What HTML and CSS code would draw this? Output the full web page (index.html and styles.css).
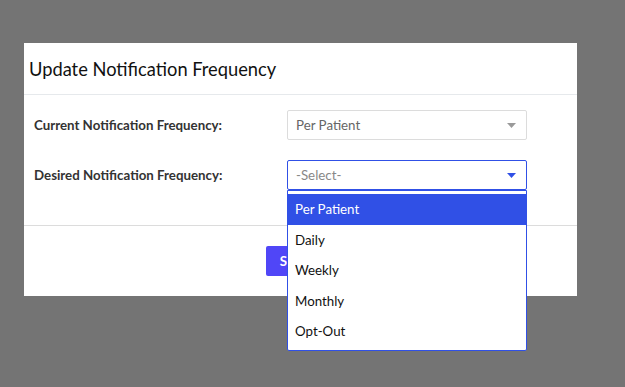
FILE: index.html
```html
<!DOCTYPE html>
<html lang="en">
<head>
    <meta charset="UTF-8">
    <title>Update Notification Frequency</title>
    <link rel="stylesheet" href="styles.css">
</head>
<body>
    <div class="modal">
        <div class="modal-header">
            <h2>Update Notification Frequency</h2>
        </div>
        <div class="modal-body">
            <div class="form-row">
                <label>Current Notification Frequency:</label>
                <div class="select disabled">
                    <span>Per Patient</span>
                    <svg class="arrow" width="9" height="5" viewBox="0 0 9 5"><path d="M0 0h9L4.5 5z"/></svg>
                </div>
            </div>
            <div class="form-row">
                <label>Desired Notification Frequency:</label>
                <div class="select-wrap">
                    <div class="select open">
                        <span class="placeholder">-Select-</span>
                        <svg class="arrow" width="9" height="5" viewBox="0 0 9 5"><path d="M0 0h9L4.5 5z"/></svg>
                    </div>
                    <ul class="options">
                        <li class="active">Per Patient</li>
                        <li>Daily</li>
                        <li>Weekly</li>
                        <li>Monthly</li>
                        <li>Opt-Out</li>
                    </ul>
                </div>
            </div>
        </div>
        <div class="modal-footer">
            <button type="button">Submit</button>
        </div>
    </div>
</body>
</html>
```

FILE: styles.css
```css
body {
    margin: 0;
    background-color: #747474;
    font-family: 'Lato', 'Noto Sans', sans-serif;
    color: #222;
    padding: 43px 0 0 24px;
    height: 387px;
    box-sizing: border-box;
    overflow: hidden;
}

.modal {
    width: 553px;
    background-color: #fff;
}

.modal-header {
    height: 51px;
    border-bottom: 1px solid #e6e9ec;
    display: flex;
    align-items: center;
    padding: 0 5px;
}

.modal-header h2 {
    margin: 0;
    font-size: 18.3px;
    font-weight: 400;
    color: #111;
}

.modal-body {
    padding: 15px 50px 15px 10px;
}

.form-row {
    display: flex;
    align-items: center;
    margin-bottom: 20px;
}

label {
    width: 253px;
    flex-shrink: 0;
    font-size: 13.3px;
    font-weight: 700;
    color: #333;
}

.select-wrap {
    position: relative;
}

.select {
    width: 240px;
    height: 30px;
    box-sizing: border-box;
    border: 1px solid #dcdcdc;
    border-radius: 2px;
    display: flex;
    align-items: center;
    justify-content: space-between;
    padding: 0 10px 0 8px;
    font-size: 13.3px;
    color: #666;
}

.select .arrow {
    fill: #9a9a9a;
}

.select.open {
    border-color: #3050e6;
}

.select.open .arrow {
    fill: #3050e6;
}

.placeholder {
    color: #888;
}

.options {
    position: absolute;
    top: 30px;
    left: 0;
    width: 240px;
    box-sizing: border-box;
    margin: 0;
    padding: 3px 0 3px;
    list-style: none;
    background-color: #fff;
    border: 1px solid #3050e6;
    border-radius: 0 0 2px 2px;
}

.options li {
    height: 30.5px;
    line-height: 30.5px;
    padding: 0 7px;
    font-size: 13.3px;
    color: #111;
}

.options li.active {
    background-color: #3050e6;
    color: #fff;
}

.modal-footer {
    border-top: 1px solid #dcdcdc;
    padding: 20px 0;
    display: flex;
    justify-content: center;
}

button {
    height: 30px;
    padding: 0 14px;
    border: none;
    border-radius: 2px;
    background-color: #5046f7;
    color: #fff;
    font-family: 'Lato', sans-serif;
    font-size: 13.3px;
    font-weight: 700;
}
```
